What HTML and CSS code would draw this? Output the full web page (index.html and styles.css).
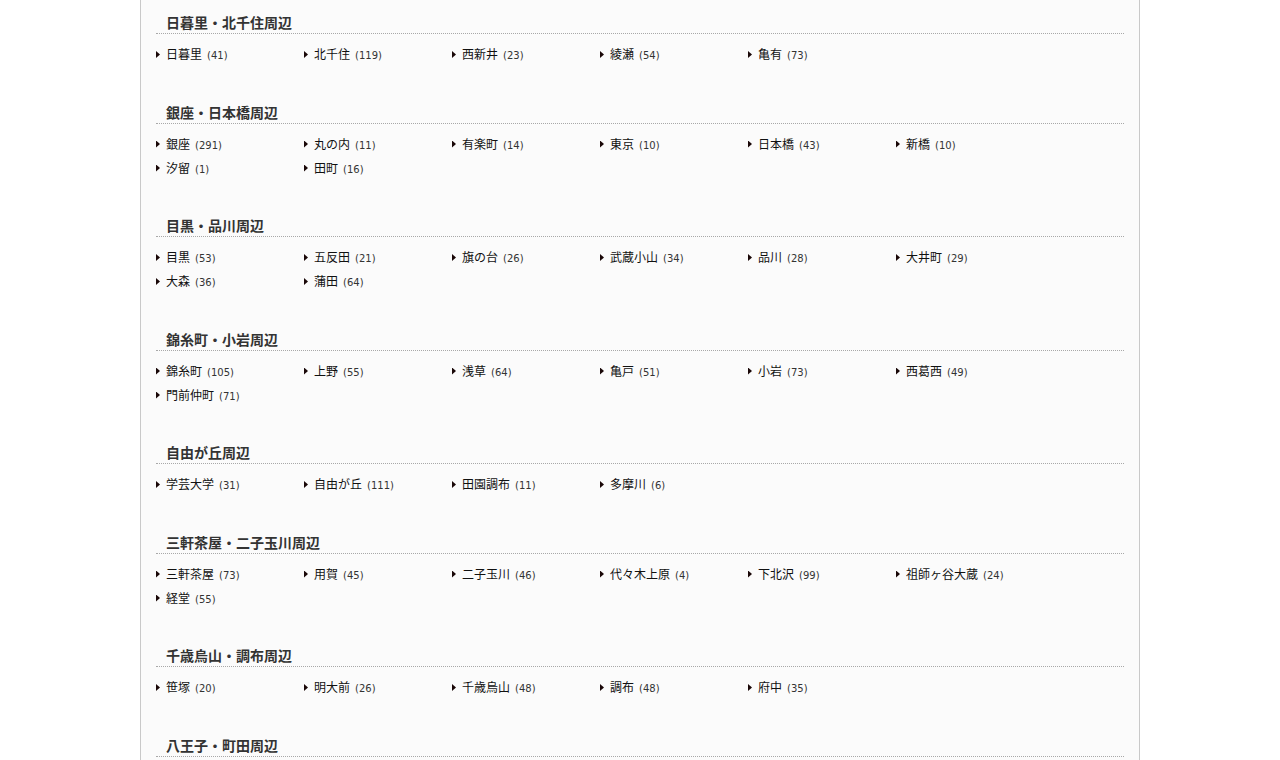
FILE: index.html
```html
<!DOCTYPE html>
<html lang="ja">
<head>
<meta charset="utf-8">
<title>エリア一覧</title>
<link rel="stylesheet" href="styles.css">
</head>
<body>
<div class="container">
  <section class="area">
    <h2 class="area-title">日暮里・北千住周辺</h2>
    <ul class="area-list">
      <li><a href="#">日暮里</a><span class="count">(41)</span></li>
      <li><a href="#">北千住</a><span class="count">(119)</span></li>
      <li><a href="#">西新井</a><span class="count">(23)</span></li>
      <li><a href="#">綾瀬</a><span class="count">(54)</span></li>
      <li><a href="#">亀有</a><span class="count">(73)</span></li>
    </ul>
  </section>
  <section class="area">
    <h2 class="area-title">銀座・日本橋周辺</h2>
    <ul class="area-list">
      <li><a href="#">銀座</a><span class="count">(291)</span></li>
      <li><a href="#">丸の内</a><span class="count">(11)</span></li>
      <li><a href="#">有楽町</a><span class="count">(14)</span></li>
      <li><a href="#">東京</a><span class="count">(10)</span></li>
      <li><a href="#">日本橋</a><span class="count">(43)</span></li>
      <li><a href="#">新橋</a><span class="count">(10)</span></li>
      <li><a href="#">汐留</a><span class="count">(1)</span></li>
      <li><a href="#">田町</a><span class="count">(16)</span></li>
    </ul>
  </section>
  <section class="area">
    <h2 class="area-title">目黒・品川周辺</h2>
    <ul class="area-list">
      <li><a href="#">目黒</a><span class="count">(53)</span></li>
      <li><a href="#">五反田</a><span class="count">(21)</span></li>
      <li><a href="#">旗の台</a><span class="count">(26)</span></li>
      <li><a href="#">武蔵小山</a><span class="count">(34)</span></li>
      <li><a href="#">品川</a><span class="count">(28)</span></li>
      <li><a href="#">大井町</a><span class="count">(29)</span></li>
      <li><a href="#">大森</a><span class="count">(36)</span></li>
      <li><a href="#">蒲田</a><span class="count">(64)</span></li>
    </ul>
  </section>
  <section class="area">
    <h2 class="area-title">錦糸町・小岩周辺</h2>
    <ul class="area-list">
      <li><a href="#">錦糸町</a><span class="count">(105)</span></li>
      <li><a href="#">上野</a><span class="count">(55)</span></li>
      <li><a href="#">浅草</a><span class="count">(64)</span></li>
      <li><a href="#">亀戸</a><span class="count">(51)</span></li>
      <li><a href="#">小岩</a><span class="count">(73)</span></li>
      <li><a href="#">西葛西</a><span class="count">(49)</span></li>
      <li><a href="#">門前仲町</a><span class="count">(71)</span></li>
    </ul>
  </section>
  <section class="area">
    <h2 class="area-title">自由が丘周辺</h2>
    <ul class="area-list">
      <li><a href="#">学芸大学</a><span class="count">(31)</span></li>
      <li><a href="#">自由が丘</a><span class="count">(111)</span></li>
      <li><a href="#">田園調布</a><span class="count">(11)</span></li>
      <li><a href="#">多摩川</a><span class="count">(6)</span></li>
    </ul>
  </section>
  <section class="area">
    <h2 class="area-title">三軒茶屋・二子玉川周辺</h2>
    <ul class="area-list">
      <li><a href="#">三軒茶屋</a><span class="count">(73)</span></li>
      <li><a href="#">用賀</a><span class="count">(45)</span></li>
      <li><a href="#">二子玉川</a><span class="count">(46)</span></li>
      <li><a href="#">代々木上原</a><span class="count">(4)</span></li>
      <li><a href="#">下北沢</a><span class="count">(99)</span></li>
      <li><a href="#">祖師ヶ谷大蔵</a><span class="count">(24)</span></li>
      <li><a href="#">経堂</a><span class="count">(55)</span></li>
    </ul>
  </section>
  <section class="area">
    <h2 class="area-title">千歳烏山・調布周辺</h2>
    <ul class="area-list">
      <li><a href="#">笹塚</a><span class="count">(20)</span></li>
      <li><a href="#">明大前</a><span class="count">(26)</span></li>
      <li><a href="#">千歳烏山</a><span class="count">(48)</span></li>
      <li><a href="#">調布</a><span class="count">(48)</span></li>
      <li><a href="#">府中</a><span class="count">(35)</span></li>
    </ul>
  </section>
  <section class="area">
    <h2 class="area-title">八王子・町田周辺</h2>
  </section>
</div>
</body>
</html>
```

FILE: styles.css
```css
html, body {
  margin: 0;
  padding: 0;
  background: #ffffff;
}

body {
  font-family: "Noto Sans CJK JP", "DejaVu Sans", sans-serif;
  color: #111111;
}

.container {
  width: 968px;
  margin: 0 auto;
  padding: 0 15px;
  min-height: 100vh;
  background: #fbfbfb;
  border-left: 1px solid #c9c9c9;
  border-right: 1px solid #c9c9c9;
}

.area {
  padding-top: 12px;
}

.area-title {
  margin: 0;
  padding: 0 10px;
  font-size: 14px;
  line-height: 21px;
  font-weight: bold;
  color: #333333;
  border-bottom: 1px dotted #a8a8a8;
}

.area-list {
  list-style: none;
  margin: 8px 0 23.5px;
  padding: 0;
  display: grid;
  grid-template-columns: repeat(6, 148px);
  grid-auto-rows: 24px;
}

.area-list li {
  display: block;
  white-space: nowrap;
  font-size: 12px;
  line-height: 24px;
}

.area-list li::before {
  content: "";
  display: inline-block;
  width: 4px;
  height: 7px;
  background: #1a0808;
  clip-path: polygon(0 0, 100% 50%, 0 100%);
  margin-right: 6px;
  vertical-align: 1px;
}

.area-list a {
  color: #111111;
  text-decoration: none;
}

.count {
  font-family: "DejaVu Sans", "Noto Sans", sans-serif;
  font-size: 10px;
  color: #333333;
  margin-left: 5px;
}
```
